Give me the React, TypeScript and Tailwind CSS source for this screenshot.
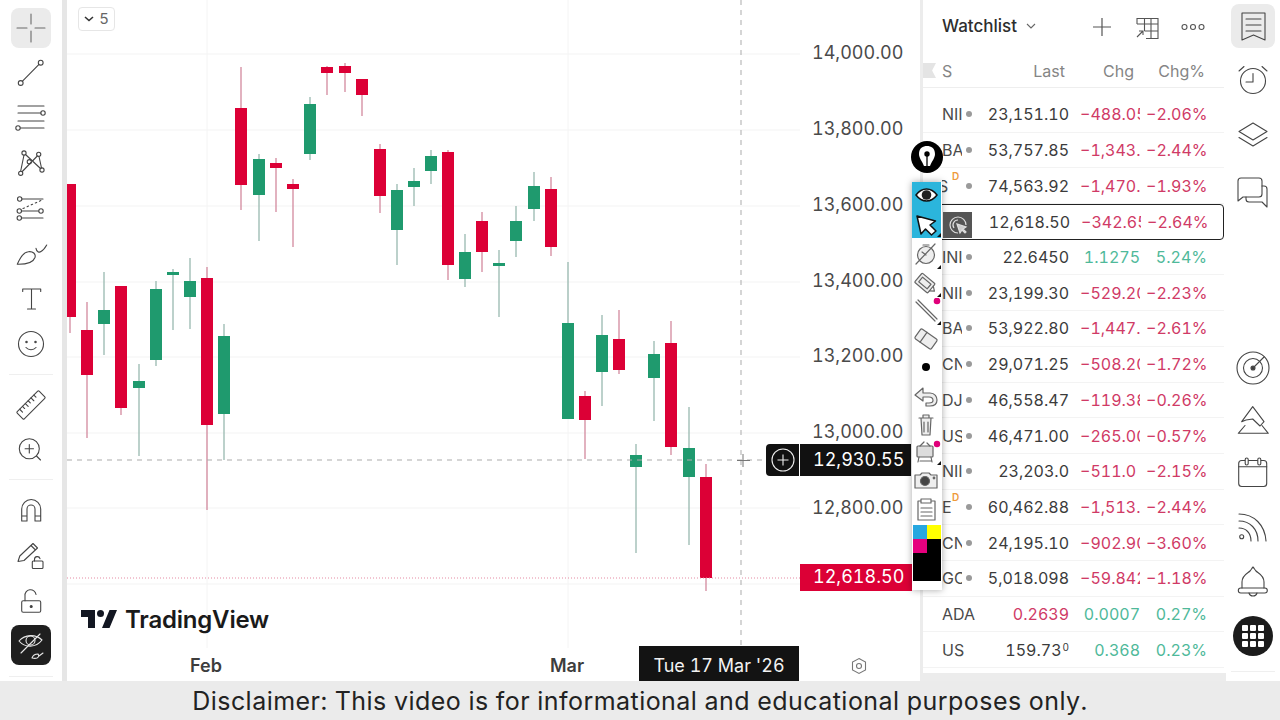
import React from 'react';

type Candle = [number, number, number, number, number, 'r' | 'g'];

// x, bodyTop, bodyBottom, wickTop, wickBottom, colour
const candles: Candle[] = [
  [70, 184, 317, 184, 333, 'r'],
  [87, 330, 375, 302, 438, 'r'],
  [104, 310, 324, 272, 355, 'g'],
  [121, 286, 408, 286, 415, 'r'],
  [139, 381, 388, 364, 456, 'g'],
  [156, 289, 360, 281, 366, 'g'],
  [173, 272, 275, 269, 330, 'g'],
  [190, 281, 297, 258, 329, 'g'],
  [207, 278, 425, 267, 510, 'r'],
  [224, 336, 414, 324, 460, 'g'],
  [241, 108, 185, 67, 210, 'r'],
  [259, 159, 195, 154, 241, 'g'],
  [276, 163, 168, 158, 212, 'r'],
  [293, 184, 189, 179, 247, 'r'],
  [310, 104, 154, 97, 160, 'g'],
  [327, 67, 73, 66, 95, 'r'],
  [345, 66, 73, 63, 92, 'r'],
  [362, 79, 95, 79, 116, 'r'],
  [380, 149, 196, 144, 213, 'r'],
  [397, 190, 230, 184, 265, 'g'],
  [414, 181, 187, 168, 206, 'g'],
  [431, 156, 171, 150, 184, 'g'],
  [448, 152, 265, 150, 280, 'r'],
  [465, 252, 279, 234, 287, 'g'],
  [482, 221, 252, 212, 272, 'r'],
  [499, 263, 266, 250, 317, 'g'],
  [516, 221, 241, 206, 257, 'g'],
  [534, 186, 209, 172, 221, 'g'],
  [551, 189, 247, 177, 256, 'r'],
  [568, 323, 419, 262, 419, 'g'],
  [585, 396, 420, 391, 459, 'r'],
  [602, 335, 372, 315, 406, 'g'],
  [619, 339, 370, 310, 374, 'r'],
  [636, 455, 467, 444, 553, 'g'],
  [654, 354, 378, 341, 421, 'g'],
  [671, 343, 447, 321, 455, 'r'],
  [689, 448, 477, 407, 545, 'g'],
  [706, 477, 578, 464, 591, 'r'],
];

const prices = ['14,000.00', '13,800.00', '13,600.00', '13,400.00', '13,200.00', '13,000.00', '12,800.00'];

type Row = { s: string; d?: boolean; nudge?: boolean; last: string; sup?: string; chg: string; pct: string; up?: boolean; lastRed?: boolean; noDot?: boolean };

const rows: Row[] = [
  { s: 'NII', last: '23,151.10', chg: '−488.05', pct: '−2.06%' },
  { s: 'BA', last: '53,757.85', chg: '−1,343.', pct: '−2.44%' },
  { s: 'S', nudge: true, d: true, last: '74,563.92', chg: '−1,470.', pct: '−1.93%' },
  { s: '', noDot: true, last: '12,618.50', chg: '−342.65', pct: '−2.64%' },
  { s: 'INI', last: '22.6450', chg: '1.1275', pct: '5.24%', up: true },
  { s: 'NII', last: '23,199.30', chg: '−529.20', pct: '−2.23%' },
  { s: 'BA', last: '53,922.80', chg: '−1,447.', pct: '−2.61%' },
  { s: 'CN', last: '29,071.25', chg: '−508.20', pct: '−1.72%' },
  { s: 'DJ', last: '46,558.47', chg: '−119.38', pct: '−0.26%' },
  { s: 'US', last: '46,471.00', chg: '−265.00', pct: '−0.57%' },
  { s: 'NII', last: '23,203.0', chg: '−511.0', pct: '−2.15%' },
  { s: 'E', d: true, last: '60,462.88', chg: '−1,513.', pct: '−2.44%' },
  { s: 'CN', last: '24,195.10', chg: '−902.90', pct: '−3.60%' },
  { s: 'GC', last: '5,018.098', chg: '−59.842', pct: '−1.18%' },
  { s: 'ADA', noDot: true, last: '0.2639', chg: '0.0007', pct: '0.27%', up: true, lastRed: true },
  { s: 'US', noDot: true, last: '159.73', sup: '0', chg: '0.368', pct: '0.23%', up: true },
];

const Ic = ({ children, s = '#454545', size = 40 }: { children: React.ReactNode; s?: string; size?: number }) => (
  <svg width={size} height={size} viewBox={`0 0 ${size} ${size}`} fill="none" stroke={s} strokeWidth="1.1" strokeLinecap="round" strokeLinejoin="round">
    {children}
  </svg>
);

// floating pen toolbar item, children are drawn around the centre
const Fl = ({ h, tri, children }: { h: number; tri?: boolean; children: React.ReactNode }) => (
  <svg width="30" height={h} viewBox={`0 0 30 ${h}`} fill="none" stroke="#666" strokeWidth="1.2" strokeLinejoin="round" strokeLinecap="round" className="block">
    <g transform={`translate(14 ${h / 2})`}>{children}</g>
    {tri && <path d={`M29 ${h - 5}v4h-4z`} fill="#111" stroke="none" />}
  </svg>
);

const Sep = ({ className }: { className: string }) => <div className={`h-px w-[44px] bg-[#efefef] ${className}`} />;

const LeftBar = () => (
  <div className="w-[62px] shrink-0 flex flex-col items-center pt-[8px]">
    <div className="w-[40px] h-[40px] rounded-lg bg-[#ebebeb]">
      <Ic s="#6b6b6b"><path d="M20 6v10M20 23v11M6 20h10M24 20h10" /></Ic>
    </div>
    <div className="mt-1">
      <Ic><circle cx="9.7" cy="31" r="2.4" /><circle cx="29.7" cy="10.7" r="2.4" /><path d="M11.5 29.2 28 12.4" /></Ic>
    </div>
    <div className="mt-1">
      <Ic><path d="M7 10h26M7 17h23M7 25h26M9.5 32H33" /><circle cx="32" cy="17" r="2.2" /><circle cx="7" cy="32" r="2.2" /></Ic>
    </div>
    <div className="mt-[6px]">
      <Ic><path d="M13 13 9.7 29M14.5 12.5 29.5 26.5M11.3 29.5 26.3 14M28 14.5 30.5 26" /><circle cx="13" cy="11" r="2.1" /><circle cx="27.7" cy="12.3" r="2.1" /><circle cx="18.3" cy="19.7" r="2.1" /><circle cx="9.7" cy="31.3" r="2.1" /><circle cx="31" cy="28" r="2.1" /></Ic>
    </div>
    <div className="mt-[6px]">
      <Ic><circle cx="8.7" cy="11" r="2.2" /><circle cx="8.3" cy="23" r="2.2" /><circle cx="30" cy="23" r="2.2" /><circle cx="8.3" cy="30" r="2.2" /><path d="M11 11h21M10.5 23h17M10.5 30H32" /><path d="M12 20.5 30 12.5" strokeDasharray="1.5 3" /></Ic>
    </div>
    <div className="mt-2">
      <Ic><path d="M6.300 28.300C9 22 13 16 17.300 15.700 22 15 25 18 24 21.500 22 27 16 28.500 6.300 28.300Z" /><path d="M25 12.300C25.500 15.500 28 17 30 15.500 32 14.500 34 12 35.700 9" /></Ic>
    </div>
    <div className="mt-[3px]">
      <Ic><path d="M11.700 12.500V10h18v2.500M20.500 10v20M16.500 30h8" /></Ic>
    </div>
    <div className="mt-[5px]">
      <Ic><circle cx="20" cy="20" r="12.500" /><circle cx="15.500" cy="18" r="0.700" fill="#3a3a3a" /><circle cx="24.500" cy="18" r="0.700" fill="#3a3a3a" /><path d="M15 23.500c2.500 3 7.500 3 10 0" /></Ic>
    </div>
    <Sep className="mt-[10px]" />
    <div className="mt-[10px]">
      <Ic><g transform="rotate(-45 20 20)"><rect x="4.500" y="15" width="31" height="10" rx="1" /><path d="M9 15v4M13 15v3M17 15v4M21 15v3M25 15v4M29 15v3" /></g></Ic>
    </div>
    <div className="mt-1">
      <Ic><circle cx="18.300" cy="19.700" r="10" /><path d="M25.500 27 29.500 31M18.300 15.500v8.400M14.100 19.700h8.400" /></Ic>
    </div>
    <Sep className="mt-[10px]" />
    <div className="mt-[10px]">
      <Ic><path d="M10.700 31V19a9.500 9.500 0 0 1 19 0v12H24V19a4 4 0 0 0-8 0v12ZM10.700 26H16M24 26h5.700" /></Ic>
    </div>
    <div className="mt-[5px]">
      <Ic><path d="M7 26.500 8.800 21 22 8.500l4.500 4.500L13 25.500ZM20 10.500l4.500 4.500" /><rect x="21.300" y="26" width="10.700" height="7.500" rx="1" /><path d="M23.500 26v-1.500a2.800 2.800 0 0 1 5.500-.8" /></Ic>
    </div>
    <div className="mt-[6px]">
      <Ic><rect x="10.700" y="19.700" width="19" height="11.500" rx="1.500" /><path d="M14 19.700V15a5.500 5.500 0 0 1 11-1.500" /><circle cx="20.200" cy="25.500" r="1" fill="#3a3a3a" /></Ic>
    </div>
    <div className="mt-1 w-[40px] h-[40px] rounded-lg bg-[#1f1f1f]">
      <Ic s="#e8e8e8"><path d="M8 16c6-7 17-7 23-1-6 8-17 8-23 1Z" /><circle cx="19.500" cy="15.500" r="4.500" /><path d="M10 28 29 9" /><path d="M21 33c1-3 4-4 6-4 1 1 1 3-1 4-2 .8-3 .5-5 0ZM28 31l4-3" /></Ic>
    </div>
    <Sep className="mt-[11px]" />
  </div>
);

const Chart = () => (
  <div className="w-[853px] shrink-0 flex flex-col relative">
    <div className="flex h-[648px]">
      <svg width="733" height="648" viewBox="0 0 733 648" className="block shrink-0">
        <g transform="translate(-67 0)">
          {[54, 130, 206, 282, 357, 433, 508, 584].map((y) => (
            <line key={y} x1="67" x2="800" y1={y} y2={y} stroke="#f3f3f3" />
          ))}
          {[207, 568].map((x) => (
            <line key={x} x1={x} x2={x} y1="0" y2="648" stroke="#f4f4f4" />
          ))}
          {candles.map(([x, t, b, wt, wb, c]) => (
            <g key={x}>
              <line x1={x} x2={x} y1={wt} y2={wb} stroke={c === 'r' ? '#cf7f95' : '#8fb3a8'} strokeWidth="1.200" />
              <rect x={x - 6} y={t} width="12" height={b - t} fill={c === 'r' ? '#dc0036' : '#1f9a6e'} />
            </g>
          ))}
          <line x1="67" x2="800" y1="578" y2="578" stroke="#e58aa3" strokeDasharray="1 2" />
          <line x1="67" x2="765" y1="460" y2="460" stroke="#ababab" strokeDasharray="5 5" />
          <line x1="741" x2="741" y1="0" y2="645" stroke="#ababab" strokeDasharray="5 5" />
          <path d="M743 454v13M737 460.500h13" stroke="#777" />
          <path d="M81 610h14v18h-7v-11h-7ZM102 628l7.500-18h7.500L109.500 628Z" fill="#131722" />
          <circle cx="100.500" cy="613.500" r="3.500" fill="#131722" />
        </g>
      </svg>
      <div className="flex-1 pt-[15px] pl-[12px] text-[18px] text-[#4a4a4a]">
        {prices.map((p) => (
          <div key={p} className="h-[75.850px] leading-[76px]">{p}</div>
        ))}
      </div>
    </div>
    <div className="absolute left-[58px] top-[607px] text-[24px] leading-[26px] font-semibold tracking-[-0.2px] text-[#1a1a1a]">TradingView</div>
    <div className="h-[33px] relative text-[18px] font-semibold text-[#3d3d3d]">
      <div className="absolute left-[123px] top-[4px]">Feb</div>
      <div className="absolute left-[483px] top-[4px]">Mar</div>
      <div className="absolute left-[572px] -top-[2px] w-[160px] h-[35px] pt-[3px] bg-[#131313] text-[#f2f2f2] font-normal flex items-center justify-center text-[18px]">Tue 17 Mar '26</div>
      <div className="absolute left-[782px] top-[8px]">
        <svg width="20" height="20" viewBox="0 0 20 20" fill="none" stroke="#777" strokeWidth="1.100"><path d="M10 2.500 16.500 6v8L10 17.500 3.500 14V6Z" /><circle cx="10" cy="10" r="2.500" /></svg>
      </div>
    </div>
    <div className="absolute left-[11px] top-[7px] w-[37px] h-[24px] rounded border border-[#e6e6e6] flex items-center justify-center gap-[5px] text-[15px] text-[#666]">
      <svg width="10" height="6" viewBox="0 0 10 6" fill="none" stroke="#333" strokeWidth="1.600"><path d="m1 1 4 3.500L9 1" /></svg>
      5
    </div>
    <div className="absolute left-[699px] top-[444px] flex h-[32px] text-white text-[18px]">
      <div className="w-[33px] mr-px rounded-l bg-[#111] flex items-center justify-center">
        <svg width="24" height="24" viewBox="0 0 24 24" fill="none" stroke="#eee" strokeWidth="1.100"><circle cx="12" cy="12" r="11" /><path d="M12 6.500v11M6.500 12h11" /></svg>
      </div>
      <div className="w-[111px] bg-[#111] pl-[13px] leading-[31px]">12,930.55</div>
    </div>
    <div className="absolute left-[733px] top-[564px] w-[112px] h-[27px] bg-[#dc0036] text-white text-[18px] pl-[13px] leading-[26px]">12,618.50</div>
  </div>
);

const Watchlist = () => (
  <div className="w-[303px] shrink-0 flex flex-col relative">
    <div className="h-[53px] flex items-center pl-[19px] text-[#2e2e2e]">
      <span className="text-[17px] font-medium">Watchlist</span>
      <svg className="ml-[9px]" width="10" height="7" viewBox="0 0 10 7" fill="none" stroke="#666" strokeWidth="1.100"><path d="m1 1 4 4 4-4" /></svg>
      <svg className="ml-[56px]" width="20" height="20" viewBox="0 0 20 20" fill="none" stroke="#555" strokeWidth="1.200"><path d="M10 1v18M1 10h18" /></svg>
      <svg className="ml-[23px]" width="24" height="24" viewBox="0 0 24 24" fill="none" stroke="#555" strokeWidth="1.100"><path d="M2 9V3.500h21v20H11M2 9h21M16 3.500v20M9.500 3.500V16M9.500 16H23" /><path d="M2 22l6-6M4 16h4v4" /></svg>
      <svg className="ml-[22px]" width="24" height="8" viewBox="0 0 24 8" fill="none" stroke="#555" strokeWidth="1.100"><circle cx="3.500" cy="4" r="2.500" /><circle cx="12" cy="4" r="2.500" /><circle cx="20.500" cy="4" r="2.500" /></svg>
    </div>
    <div className="h-[35px] pt-[1px] w-[301px] flex items-center text-[16px] text-[#858585] border-b border-[#eeeeee] relative">
      <div className="w-[13px] h-[15px] bg-[#e4e4e4] [clip-path:polygon(0_0,100%_0,70%_50%,100%_100%,0_100%)]" />
      <span className="ml-[6px] w-[85px]">S</span>
      <span className="w-[38px] text-right">Last</span>
      <span className="w-[69px] text-right">Chg</span>
      <span className="w-[71px] text-right">Chg%</span>
    </div>
    <div className="mt-[9px] w-[301px] text-[16px] text-[#3b3b3b]">
      {rows.map((r, i) => (
        <div
          key={i}
          className={r.noDot && !r.s ? 'h-[35.700px] flex items-center rounded border-[1.500px] border-[#222] -ml-1 pl-1' : 'h-[35.700px] flex items-center border-b border-[#f3f3f3]'}
        >
          <div className={r.noDot ? 'ml-[19px] w-[21px] whitespace-nowrap h-full flex items-center text-[#4a4a4a]' : 'ml-[19px] w-[20px] mr-[1px] overflow-hidden whitespace-nowrap h-full flex items-center text-[#4a4a4a]'}>
            <span className={r.nudge ? '-ml-[4px]' : ''}>{r.s}</span>
          </div>
          <div className="w-[12px] flex justify-center relative">
            {r.d && <span className="absolute -left-[11px] -top-[14px] text-[10px] font-semibold text-[#ee9a3a]">D</span>}
            {r.s && !r.noDot && <span className="w-[6px] h-[6px] rounded-full bg-[#9a9a9a]" />}
          </div>
          <div className={r.lastRed ? 'w-[94px] text-right text-[#d03a66]' : 'w-[94px] text-right'}>
            {r.last}
            {r.sup && <sup className="text-[10px] ml-px">{r.sup}</sup>}
          </div>
          <div className={r.up ? 'ml-[11px] w-[60px] overflow-hidden whitespace-nowrap text-right text-[#4fb99a]' : 'ml-[11px] w-[60px] overflow-hidden whitespace-nowrap text-[#d03a66]'}>{r.chg}</div>
          <div className={r.up ? 'ml-[6px] w-[61px] overflow-hidden whitespace-nowrap text-right text-[#4fb99a]' : 'ml-[6px] w-[61px] overflow-hidden whitespace-nowrap text-[#d03a66]'}>{r.pct}</div>
        </div>
      ))}
    </div>
    <div className="absolute left-0 right-0 top-[673px] h-[8px] bg-[#ececec]" />
  </div>
);

const RightBar = () => (
  <div className="w-[54px] shrink-0 flex flex-col items-center pt-1">
    <div className="w-[44px] h-[44px] rounded-lg bg-[#ebebeb]">
      <Ic size={44}><path d="M11 9h23v27l-11.500-5L11 36ZM15 15h15M15 21h15M15 27h15" /></Ic>
    </div>
    <div className="mt-[10px]">
      <Ic size={44}><circle cx="22" cy="23" r="12.500" /><path d="M22 15.500V24h-7M8 13l5-4.500M36 13l-5-4.500" /></Ic>
    </div>
    <div className="mt-[11px]">
      <Ic size={44}><path d="M22 10 36 18.500 22 27 8 18.500ZM8 24.500 22 33l14-8.500" /></Ic>
    </div>
    <div className="mt-3">
      <Ic size={44}><path d="M10 9h18a3 3 0 0 1 3 3v13a3 3 0 0 1-3 3H12l-5 4V12a3 3 0 0 1 3-3Z" /><path d="M31 17h2a3 3 0 0 1 3 3v18l-5-5H18a3 3 0 0 1-3-3v-2" /></Ic>
    </div>
    <div className="mt-[133px]">
      <Ic size={44}><circle cx="22" cy="22" r="16" /><circle cx="22" cy="22" r="9.500" /><circle cx="22" cy="22" r="2" fill="#3a3a3a" /><path d="M22 22 33 11" /></Ic>
    </div>
    <div className="mt-[9px]">
      <Ic size={44}><path d="M21.700 7.700 10.700 22.700 15 21 21.700 20 29 27 33 22.700Z" /><path d="M14 26.500 7.300 34.300H37.300L31 26.500" /></Ic>
    </div>
    <div className="mt-2">
      <Ic size={44}><rect x="7.700" y="9.500" width="28" height="26" rx="3" /><path d="M7.700 15.700h28" /><rect x="14.200" y="7" width="3" height="7" rx="1.500" fill="#fff" /><rect x="26.800" y="7" width="3" height="7" rx="1.500" fill="#fff" /></Ic>
    </div>
    <div className="mt-[9px]">
      <Ic size={44}><circle cx="10.700" cy="32.700" r="2" /><path d="M8 24c7 0 12 5 12 13M8 17c11 0 19 8 19 20M8 10c15 0 26 11 27 27" /></Ic>
    </div>
    <div className="mt-3">
      <Ic size={44}><path d="M11 28v-6c0-7 6-9 8-11 1-1 2-3 3-4 1 1 2 3 3 4 2 2 8 4 8 11v6" /><rect x="7.300" y="28" width="29" height="5" rx="2.500" /><path d="M18 33c1 4 7 4 8 0" /></Ic>
    </div>
    <div className="mt-3 w-[40px] h-[40px] rounded-full bg-[#1c1c1c] flex items-center justify-center">
      <div className="grid grid-cols-3 gap-[2px]">
        {[0, 1, 2, 3, 4, 5, 6, 7, 8].map((n) => (
          <div key={n} className="w-[6px] h-[6px] rounded-[1px] bg-white" />
        ))}
      </div>
    </div>
    <Sep className="mt-[15px]" />
  </div>
);

const PenBar = () => (
  <>
    <div className="absolute left-[911px] top-[141px] w-[32px] h-[32px] rounded-full bg-black flex items-center justify-center">
      <svg width="22" height="26" viewBox="-11 -13 22 26">
        <path d="M-8-3C-8-9-4-11 0-11S8-9 8-3C8 1 5 4 3 9H-3C-5 4-8 1-8-3Z" fill="#fff" />
        <circle cx="0" cy="-3" r="2.700" fill="#000" />
        <path d="M0-3V10" stroke="#000" strokeWidth="1.300" />
      </svg>
    </div>
    <div className="absolute left-[912px] top-[182px] w-[30px] h-[408px] bg-white shadow-[0_0_7px_rgba(0,0,0,0.35)]">
      <div className="h-[56px] w-[29px] bg-[#2bb5dc] relative">
        <svg width="30" height="56" viewBox="0 0 30 56" fill="none" className="block">
          <path d="M4 13c6-8 15-8 21 0-6 8-15 8-21 0Z" fill="#fff" stroke="#111" strokeWidth="1.500" />
          <circle cx="14.500" cy="13" r="4.800" fill="#222" />
          <path d="M5 34 9 52 13.500 47 19.500 53 24 49 18 43 23.500 39Z" fill="#fff" stroke="#111" strokeWidth="1.500" strokeLinejoin="round" />
          <path d="M29 51v4h-4z" fill="#111" />
        </svg>
      </div>
      <Fl h={32} tri>
        <circle cx="0" cy="1" r="8.500" fill="#eee" />
        <path d="M-10 10 9-10M-3-9H3" />
        <path d="M-4 -2 0 1" />
      </Fl>
      <Fl h={28} tri>
        <g transform="rotate(40)"><rect x="-10" y="-6" width="17" height="12" rx="1" fill="#eee" /><rect x="-7" y="-3" width="11" height="6" /><path d="M7-3 11 0 7 3" /></g>
      </Fl>
      <Fl h={28} tri>
        <path d="M-10-10 9 9M-8-12 11 7" />
        <circle cx="11" cy="-11" r="3.300" fill="#e0007a" stroke="none" />
      </Fl>
      <Fl h={26}>
        <g transform="rotate(35)"><rect x="-10" y="-6" width="20" height="12" rx="1.500" fill="#eee" /><path d="M-3-6V6" /></g>
      </Fl>
      <Fl h={30}>
        <circle cx="0" cy="0" r="4" fill="#000" stroke="none" />
      </Fl>
      <Fl h={30}>
        <path d="M-3-9-11-2-3 4V0H3C6 0 7 2 7 3.500S6 6 3 6H0V9H4C9 9 11 6 11 3S9-4 4-4H-3Z" fill="#eee" />
      </Fl>
      <Fl h={26}>
        <path d="M-7-7H7M-5-7-4 10H4L5-7M-3-7V-10H3V-7M-2-3V7M2-3V7" fill="#eee" />
      </Fl>
      <Fl h={28} tri>
        <rect x="-9" y="-6" width="16" height="11" rx="1" fill="#ddd" />
        <path d="M-6-6-2-10M4-6 1-9M-7 5-8 10M5 5 6 10M-6 9H5" />
        <circle cx="11" cy="-8" r="3.200" fill="#e0007a" stroke="none" />
      </Fl>
      <Fl h={30}>
        <path d="M-11-6H-6L-4-8H3L5-6H11V7H-11Z" fill="#eee" />
        <circle cx="-1" cy="0" r="4.500" fill="#444" />
        <circle cx="8" cy="-3" r="0.800" fill="#555" />
      </Fl>
      <Fl h={26}>
        <path d="M-5-8H-8V11H9V-8H6M-5-10H5V-6H-5ZM-5-1H6M-5 3H6M-5 7H6" />
      </Fl>
      <div className="mt-[3px] ml-[1px] w-[28px] h-[56px] grid grid-cols-2 grid-rows-4">
        <div className="bg-[#27a7e0]" />
        <div className="bg-[#ffff00]" />
        <div className="bg-[#e6007e]" />
        <div className="bg-black" />
        <div className="bg-black col-span-2 row-span-2" />
      </div>
    </div>
    <div className="absolute left-[943px] top-[212px] w-[29px] h-[26px] bg-[#555] flex items-center justify-center">
      <svg width="22" height="22" viewBox="0 0 22 22" fill="none" stroke="#ddd" strokeWidth="1.200">
        <path d="M11 19a8 8 0 1 1 8-8" />
        <path d="M11 6a5 5 0 0 0-4 8" />
        <path d="M10 10l3 9 2-3 3 3 1-1-3-3 3-2Z" fill="#ccc" />
      </svg>
    </div>
  </>
);

export default function App() {
  return (
    <div className="w-[1280px] h-[720px] relative overflow-hidden bg-white [font-family:Inter,sans-serif] tabular-nums">
      <div className="flex h-[681px]">
        <LeftBar />
        <div className="w-[5px] shrink-0 bg-[#e6e6e6]" />
        <Chart />
        <div className="w-[3px] shrink-0 bg-[#ececec]" />
        <Watchlist />
        <RightBar />
      </div>
      <div className="h-[39px] pt-[2px] bg-[#ebebeb] flex items-center justify-center text-[25px] tracking-[0.46px] text-[#222]">
        Disclaimer: This video is for informational and educational purposes only.
      </div>
      <PenBar />
    </div>
  );
}
